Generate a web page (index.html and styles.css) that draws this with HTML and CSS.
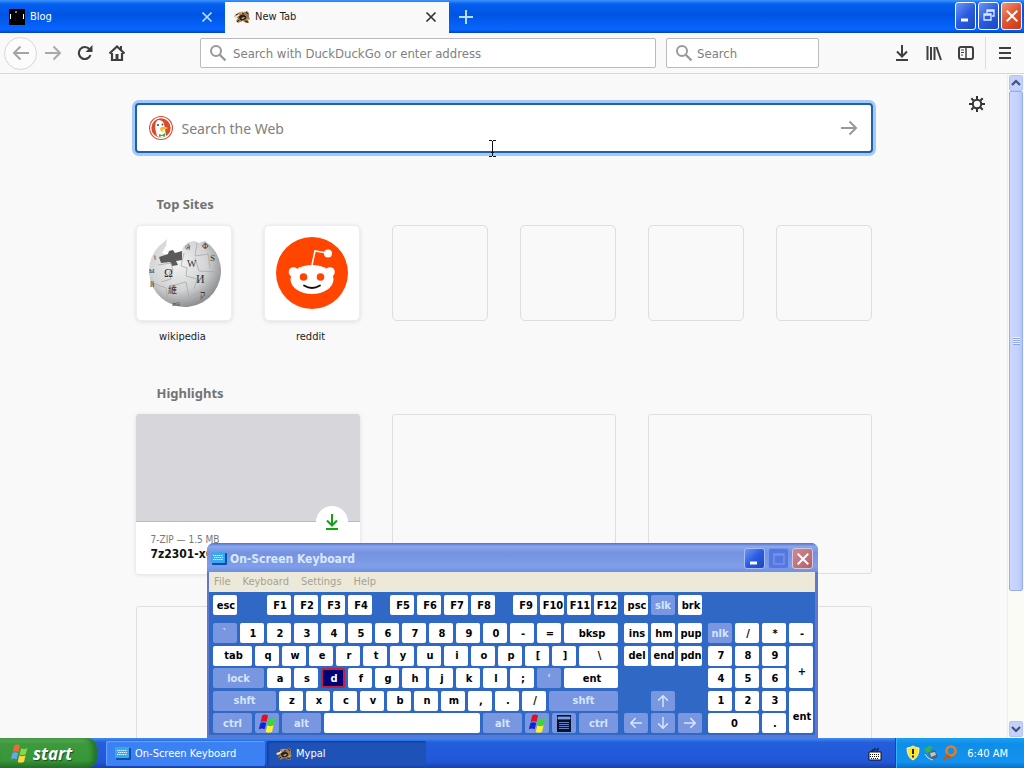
FILE: index.html
```html
<!DOCTYPE html>
<html lang="en">
<head>
    <meta charset="UTF-8">
    <title>New Tab</title>
    <link rel="stylesheet" href="styles.css">
</head>
<body>

<!-- shared icons -->
<svg class="sprite" width="0" height="0" aria-hidden="true">
    <symbol id="close" viewBox="0 0 12 12">
        <path d="M1.5 1.5l9 9M10.5 1.5l-9 9" fill="none" stroke="currentColor" stroke-width="1.7"/>
    </symbol>
    <symbol id="magnifier" viewBox="0 0 18 18">
        <circle cx="7" cy="7" r="5" fill="none" stroke="#999" stroke-width="2"/>
        <path d="M10.5 10.5l6 6" stroke="#999" stroke-width="2.4"/>
    </symbol>
    <symbol id="arrow" viewBox="0 0 16 16">
        <path d="M0 8h15M8.5 1.5L15 8l-6.500 6.500" fill="none" stroke="currentColor" stroke-width="2"/>
    </symbol>
    <symbol id="download" viewBox="0 0 16 16">
        <path d="M8 0v11M3 6.500l5 5 5-5M2 15h12" fill="none" stroke="currentColor" stroke-width="2"/>
    </symbol>
    <symbol id="flag" viewBox="0 0 18 18">
        <path d="M4 1.500q2.500-2 5.500 0l-1.500 6q-3-1.500-5.500 0z" fill="var(--f1)"/>
        <path d="M10.500 4q3 1.500 6-.500l-1.500 6q-3 2-6 .500z" fill="var(--f2)"/>
        <path d="M2.300 8.500q2.500-1.500 5.500 0l-1.500 6q-3-1.500-5.500 0z" fill="var(--f3)"/>
        <path d="M8.800 11q3 1.500 6-.300l-1.500 6q-3 2-6 .300z" fill="var(--f4)"/>
    </symbol>
    <symbol id="osk" viewBox="0 0 16 14">
        <rect x="1" y="1" width="15" height="12" rx="1" fill="#0a50a8"/>
        <rect width="14" height="11" rx="1" fill="#3ba7ef"/>
        <path d="M2 3.500h10M3 5.500h9M2 7.500h10" stroke="#e6f8ff" stroke-width="1.200" stroke-dasharray="1.300 .600"/>
    </symbol>
    <symbol id="mypal" viewBox="0 0 16 16">
        <path d="M0 8q1-3 4-4 3-2 7-1l2-1 2 2v4l1 2-2 1 1 3h-3l-3-2-3 1-2 1-2-2 2-3z" fill="#9a7a50"/>
        <path d="M5 8q4-4 7 0l-1 2-4 1zM12 3l2 2M3 13l2-2M11 12l3 1" fill="#2c2016" stroke="#2c2016"/>
        <path d="M0 8l4-3 2 1-4 3zM7 9l4-1-2 2z" fill="#f4e5c8"/>
        <path d="M4 4l4-1 3 1-3 1zM12 10l3-1-1 2z" fill="#d3b283"/>
        <path d="M2 6l2-1M8 4l2 1" stroke="#2c2016"/>
    </symbol>
</svg>

<header class="titlebar">
    <div class="tab">
        <svg width="16" height="16" viewBox="0 0 16 16"><path d="M0 0h16v16H0z"/><path d="M1.500 5v5M14.500 5v5M7 2v2" stroke="#fff"/></svg>
        <span class="tab-title">Blog</span>
        <button class="tab-close" aria-label="Close Blog"><svg width="12" height="12"><use href="#close"/></svg></button>
    </div>
    <div class="tab active">
        <svg width="16" height="16"><use href="#mypal"/></svg>
        <span class="tab-title">New Tab</span>
        <button class="tab-close" aria-label="Close New Tab"><svg width="12" height="12"><use href="#close"/></svg></button>
    </div>
    <button class="new-tab" aria-label="Open a new tab">
        <svg width="14" height="14" viewBox="0 0 14 14"><path d="M7 0v14M0 7h14" stroke="#b8deff" stroke-width="2"/></svg>
    </button>
    <div class="win-buttons">
        <button class="win-button" aria-label="Minimize"><svg width="16" height="16" viewBox="0 0 16 16"><path d="M3 12h7" stroke="#fff" stroke-width="3"/></svg></button>
        <button class="win-button" aria-label="Restore"><svg width="16" height="16" viewBox="0 0 16 16"><path d="M3 6h7v6H3zM3 7h7M6 5V2h7v6h-2M6 3h7" fill="none" stroke="#dcebff" stroke-width="1.300"/></svg></button>
        <button class="win-button red" aria-label="Close"><svg width="14" height="14"><use href="#close"/></svg></button>
    </div>
</header>

<nav class="toolbar">
    <button class="tool back" aria-label="Back"><svg class="flip" width="16" height="16"><use href="#arrow"/></svg></button>
    <button class="tool faded" aria-label="Forward"><svg width="16" height="16"><use href="#arrow"/></svg></button>
    <button class="tool" aria-label="Reload">
        <svg width="16" height="16" viewBox="0 0 16 16"><path d="M12.500 4.200A6 6 0 1 0 13.500 10" fill="none" stroke="currentColor" stroke-width="2.200"/><path d="M15.500 0v7H8.500z" fill="currentColor"/></svg>
    </button>
    <button class="tool" aria-label="Home">
        <svg width="16" height="16" viewBox="0 0 16 16"><path d="M0.500 8.500L8 1.500l7.500 7M3 8v7h10V8" fill="none" stroke="currentColor" stroke-width="2.200"/><path d="M6.500 9h3v6h-3zM11 1h2v4h-2z" fill="currentColor"/></svg>
    </button>
    <label class="field address">
        <svg width="18" height="18"><use href="#magnifier"/></svg>
        <input type="text" placeholder="Search with DuckDuckGo or enter address" aria-label="Address">
    </label>
    <label class="field search">
        <svg width="18" height="18"><use href="#magnifier"/></svg>
        <input type="text" placeholder="Search" aria-label="Search">
    </label>
    <div class="tools-right">
        <button class="tool" aria-label="Downloads"><svg width="16" height="16"><use href="#download"/></svg></button>
        <button class="tool" aria-label="Library">
            <svg width="16" height="16" viewBox="0 0 16 16"><path d="M1.500 1v14M5 2v13M8.500 2v13M10.500 2l4.500 13" fill="none" stroke="currentColor" stroke-width="2"/></svg>
        </button>
        <button class="tool" aria-label="Sidebars">
            <svg width="16" height="16" viewBox="0 0 16 16"><rect x="1" y="2" width="14" height="12" rx="2" fill="none" stroke="currentColor" stroke-width="2"/><path d="M8 2v12" stroke="currentColor" stroke-width="1.500"/><path d="M3 5h3M3 7.500h3M3 10h2" stroke="currentColor"/></svg>
        </button>
        <button class="tool menu" aria-label="Menu">
            <svg width="14" height="14" viewBox="0 0 14 14"><path d="M1 2h12M1 7h12M1 12h12" stroke="currentColor" stroke-width="2"/></svg>
        </button>
    </div>
</nav>

<div class="viewport">
    <main class="page">
        <button class="gear" aria-label="Customize">
            <svg width="16" height="16" viewBox="0 0 16 16"><circle cx="8" cy="8" r="4.200" fill="none" stroke="#333" stroke-width="2"/><path d="M8 0v3M8 13v3M0 8h3M13 8h3M2.300 2.300l2.200 2.200M11.500 11.500l2.200 2.200M13.700 2.300l-2.200 2.200M4.500 11.500l-2.200 2.200" stroke="#333" stroke-width="2"/></svg>
        </button>
        <div class="column">
            <form class="web-search">
                <svg width="24" height="24" viewBox="0 0 24 24">
                    <circle cx="12" cy="12" r="12" fill="#dc4a2c"/>
                    <circle cx="12" cy="12" r="10.300" fill="none" stroke="#fff" stroke-width="1.200"/>
                    <path d="M8 20Q5 10 7 6l2-2q5 0 6 4l1 5 1 8q-5 2-9-1z" fill="#fff"/>
                    <path d="M12 11q4-1 7 1-2 2-6 2l3 2q-5 0-5-3z" fill="#f7bd25"/>
                    <path d="M10 18l3 1 3-2v4l-3-1-3 1z" fill="#4caa45"/>
                    <circle cx="9" cy="9" r="1" fill="#345"/><circle cx="13.500" cy="8.500" r=".900" fill="#345"/>
                </svg>
                <input type="text" placeholder="Search the Web" aria-label="Search the Web">
                <button type="button" aria-label="Go"><svg width="16" height="16"><use href="#arrow"/></svg></button>
            </form>

            <h2>Top Sites</h2>
            <div class="sites">
                <a class="site" href="#wikipedia">
                    <span class="tile filled">
                        <svg width="76" height="76" viewBox="0 0 76 76">
                            <defs>
                                <radialGradient id="globe" cx=".4" cy=".35" r=".68">
                                    <stop offset="0" stop-color="#f3f3f3"/>
                                    <stop offset=".6" stop-color="#d2d3d4"/>
                                    <stop offset="1" stop-color="#888a8c"/>
                                </radialGradient>
                            </defs>
                            <path d="M13 11l5-4 3-3-1 7-4 7 5 2 5 1 9-3 2-6 6-5 6-1 4 2 6-2a36 36 0 1 1-46 5z" fill="url(#globe)"/>
                            <path d="M13 22l9-3 1-3 4-1 2 3 7-2v9l-6 1 2 4-6 1-2-4-9 1z" fill="#5a5a5a"/>
                            <path d="M12 30l13-2 2 7-4 2 2 7-10 3M38 18l-3 13 6 2-1 8 11 3-3 10M51 8l-2 13 13-2 2 14M4 47l16 6 2 14M25 51l15-4 3 15 13-6M49 23l4 13 19 1" fill="none" stroke="#aaa" stroke-width=".8"/>
                            <g font-family="Liberation Serif, serif" fill="#333">
                                <text x="18" y="42" font-size="12">Ω</text>
                                <text x="41" y="32" font-size="10">W</text>
                                <text x="50" y="48" font-size="12">И</text>
                                <text x="54" y="63" font-size="10">ק</text>
                                <text x="56" y="14" font-size="8">Ф</text>
                                <text x="64" y="26" font-size="9">S</text>
                                <text x="39" y="15" font-size="7">जे</text>
                                <text x="22" y="58" font-size="9" font-family="Noto Sans CJK SC, sans-serif">維</text>
                                <text x="3" y="38" font-size="8">ы</text>
                                <text x="4" y="52" font-size="8">й</text>
                                <text x="8" y="24" font-size="7">ţ</text>
                                <text x="26" y="71" font-size="7">வி</text>
                            </g>
                        </svg>
                    </span>
                    <span class="site-name">wikipedia</span>
                </a>
                <a class="site" href="#reddit">
                    <span class="tile filled">
                        <svg width="72" height="72" viewBox="0 0 72 72">
                            <circle cx="36" cy="36" r="36" fill="#ff4500"/>
                            <path d="M36 28l3-14 12 2" fill="none" stroke="#fff" stroke-width="1.600"/>
                            <circle cx="52" cy="16.500" r="4" fill="#fff"/>
                            <circle cx="17.500" cy="35" r="4.800" fill="#fff"/><circle cx="54" cy="35" r="4.800" fill="#fff"/>
                            <ellipse cx="36" cy="42.500" rx="21.500" ry="14.500" fill="#fff"/>
                            <circle cx="27.500" cy="40" r="3.800" fill="#ff4500"/><circle cx="44.500" cy="40" r="3.800" fill="#ff4500"/>
                            <path d="M28 48.500q8 5 16 0" fill="none" stroke="#111" stroke-width="1.800" stroke-linecap="round"/>
                        </svg>
                    </span>
                    <span class="site-name">reddit</span>
                </a>
                <span class="tile"></span>
                <span class="tile"></span>
                <span class="tile"></span>
                <span class="tile"></span>
            </div>

            <h2>Highlights</h2>
            <div class="cards">
                <a class="card filled" href="#7zip">
                    <span class="preview"></span>
                    <span class="badge"><svg width="16" height="16"><use href="#download"/></svg></span>
                    <span class="source">7-ZIP — 1.5 MB</span>
                    <span class="file">7z2301-x64.exe</span>
                </a>
                <span class="card"></span>
                <span class="card"></span>
                <span class="card"></span>
                <span class="card"></span>
                <span class="card"></span>
            </div>
        </div>
        <svg class="cursor" width="9" height="17" viewBox="0 0 9 17"><path d="M1 .5h3M5 .5h3M1 16.500h3M5 16.500h3M4.500 1v15M3 12.500h3" stroke="#111" fill="none"/></svg>
    </main>
    <div class="scrollbar">
        <button class="scroll-arrow" aria-label="Scroll up"><svg width="10" height="8" viewBox="0 0 10 8"><path d="M1 6l4-4 4 4" fill="none" stroke="#3b5284" stroke-width="2.200"/></svg></button>
        <div class="thumb"><span class="grip"></span></div>
        <button class="scroll-arrow down" aria-label="Scroll down"><svg width="10" height="8" viewBox="0 0 10 8"><path d="M1 2l4 4 4-4" fill="none" stroke="#3b5284" stroke-width="2.200"/></svg></button>
    </div>
</div>

<section class="keyboard">
    <div class="kb-title">
        <svg width="16" height="14"><use href="#osk"/></svg>
        <span>On-Screen Keyboard</span>
        <button class="win-button" aria-label="Minimize keyboard"><svg width="16" height="16" viewBox="0 0 16 16"><path d="M3 12h7" stroke="#fff" stroke-width="3"/></svg></button>
        <button class="win-button off" aria-label="Maximize keyboard" disabled><svg width="16" height="16" viewBox="0 0 16 16"><path d="M3 3h10v10H3zM3 4h10" fill="none" stroke="#6f93ee" stroke-width="1.500"/></svg></button>
        <button class="win-button red" aria-label="Close keyboard"><svg width="14" height="14"><use href="#close"/></svg></button>
    </div>
    <div class="kb-menu">
        <button>File</button><button>Keyboard</button><button>Settings</button><button>Help</button>
    </div>
    <div class="keys">
        <div class="block main">
            <div class="row fn">
                <button>esc</button>
                <div class="row"><button>F1</button><button>F2</button><button>F3</button><button>F4</button></div>
                <div class="row"><button>F5</button><button>F6</button><button>F7</button><button>F8</button></div>
                <div class="row"><button>F9</button><button>F10</button><button>F11</button><button>F12</button></div>
            </div>
            <div class="rows">
                <div class="row"><button class="dim">`</button><button>1</button><button>2</button><button>3</button><button>4</button><button>5</button><button>6</button><button>7</button><button>8</button><button>9</button><button>0</button><button>-</button><button>=</button><button class="grow">bksp</button></div>
                <div class="row"><button class="w-tab">tab</button><button>q</button><button>w</button><button>e</button><button>r</button><button>t</button><button>y</button><button>u</button><button>i</button><button>o</button><button>p</button><button>[</button><button>]</button><button class="grow">\</button></div>
                <div class="row"><button class="w-lock dim">lock</button><button>a</button><button>s</button><button class="pressed">d</button><button>f</button><button>g</button><button>h</button><button>j</button><button>k</button><button>l</button><button>;</button><button class="dim">'</button><button class="grow">ent</button></div>
                <div class="row"><button class="w-shift dim">shft</button><button>z</button><button>x</button><button>c</button><button>v</button><button>b</button><button>n</button><button>m</button><button>,</button><button>.</button><button>/</button><button class="grow dim">shft</button></div>
                <div class="row">
                    <button class="w-tab dim">ctrl</button>
                    <button class="dim" aria-label="Left Windows"><svg width="19" height="19"><use href="#flag"/></svg></button>
                    <button class="w-tab dim">alt</button>
                    <button class="grow" aria-label="Space"></button>
                    <button class="w-tab dim">alt</button>
                    <button class="dim" aria-label="Right Windows"><svg width="19" height="19"><use href="#flag"/></svg></button>
                    <button class="dim" aria-label="Context menu"><svg width="14" height="17" viewBox="0 0 14 17"><path d="M0 0h14v17H0z" fill="#071129"/><path d="M1 2h12v2H1zM2 7.500h10M2 9.500h10M2 11.500h10M2 13.500h10" fill="#829ce6" stroke="#829ce6" stroke-width=".8"/></svg></button>
                    <button class="w-tab dim">ctrl</button>
                </div>
            </div>
        </div>
        <div class="block">
            <div class="row"><button>psc</button><button class="dim">slk</button><button>brk</button></div>
            <div class="pad nav">
                <button>ins</button><button>hm</button><button>pup</button>
                <button>del</button><button>end</button><button>pdn</button>
                <button class="dim up" aria-label="Up"><svg class="turn-up" width="12" height="12"><use href="#arrow"/></svg></button>
                <button class="dim left" aria-label="Left"><svg class="flip" width="12" height="12"><use href="#arrow"/></svg></button>
                <button class="dim down" aria-label="Down"><svg class="turn-down" width="12" height="12"><use href="#arrow"/></svg></button>
                <button class="dim right" aria-label="Right"><svg width="12" height="12"><use href="#arrow"/></svg></button>
            </div>
        </div>
        <div class="block last">
            <div class="pad num">
                <button class="dim">nlk</button><button>/</button><button>*</button><button>-</button>
                <button>7</button><button>8</button><button>9</button><button class="tall">+</button>
                <button>4</button><button>5</button><button>6</button>
                <button>1</button><button>2</button><button>3</button><button class="tall">ent</button>
                <button class="wide">0</button><button>.</button>
            </div>
        </div>
    </div>
</section>

<footer class="taskbar">
    <button class="start"><svg width="19" height="19"><use href="#flag"/></svg>start</button>
    <div class="tasks">
        <button class="task"><svg width="16" height="14"><use href="#osk"/></svg>On-Screen Keyboard</button>
        <button class="task current"><svg width="16" height="16"><use href="#mypal"/></svg>Mypal</button>
    </div>
    <svg class="lang" width="14" height="14" viewBox="0 0 14 14"><path d="M1 5h12v8H1z" fill="#fff" stroke="#111"/><path d="M2 7.500h10M2 9.500h10M3 11.500h8" stroke="#111" stroke-dasharray="1 1"/><path d="M4 5V3h3V1M8 3h2V1" fill="none" stroke="#111"/></svg>
    <div class="tray">
        <svg width="14" height="16" viewBox="0 0 14 16"><path d="M7 1q3 2 6 2 0 9-6 12Q1 12 1 3q3 0 6-2z" fill="#fbe52b" stroke="#fff6bb"/><path d="M7 4v5M7 10.500v2" stroke="#222" stroke-width="2"/></svg>
        <svg width="14" height="16" viewBox="0 0 14 16"><path d="M4 7l7-2 3 7-7 3z" fill="#55606a"/><path d="M6 8l5-1 1 3-5 2z" fill="#b5c9d8"/><path d="M0 4l5-3 4 1-3 2 1 3-4 1z" fill="#35b544"/><path d="M1 9l3 4 5 2" stroke="#ddd" fill="none"/></svg>
        <svg width="16" height="16" viewBox="0 0 16 16"><circle cx="9" cy="6" r="4.500" fill="none" stroke="#ef7d18" stroke-width="2.500"/><path d="M6 9.500L2 15M6 11l3 2" stroke="#c35a12" stroke-width="2.500"/></svg>
        <time>6:40 AM</time>
    </div>
</footer>

</body>
</html>
```

FILE: styles.css
```css
* {
    box-sizing: border-box;
}

body {
    margin: 0;
    height: 100vh;
    display: flex;
    flex-direction: column;
    overflow: hidden;
    position: relative;
    background: #f9f9fa;
    color: #222;
    font: 11px "DejaVu Sans Condensed", "Noto Sans", sans-serif;
}

button, input {
    margin: 0;
    padding: 0;
    border: 0;
    background: none;
    color: inherit;
    font: inherit;
}

input {
    min-width: 0;
    flex: 1;
    outline: none;
}

input::placeholder {
    color: #808080;
    opacity: 1;
}

a {
    color: inherit;
    text-decoration: none;
}

svg {
    display: block;
    flex: none;
}

.sprite {
    position: absolute;
}

.flip {
    transform: rotate(180deg);
}

.turn-up {
    transform: rotate(-90deg);
}

.turn-down {
    transform: rotate(90deg);
}

/* title bar */
.titlebar {
    flex: none;
    height: 33px;
    display: flex;
    background: linear-gradient(#3d95ff, #0560ef 12%, #0054e3 45%, #0560f5 75%, #0466ff 90%, #0041c4);
}

.tab {
    width: 225px;
    display: flex;
    align-items: center;
    gap: 5px;
    padding: 0 12px 0 9px;
    color: #fff;
}

.tab.active {
    width: 224px;
    margin-top: 2px;
    padding-bottom: 2px;
    background: #f9f9fa;
    color: #222;
}

.tab-title {
    flex: 1;
}

.tab-close {
    color: #b8deff;
}

.active .tab-close {
    color: #333;
}

.new-tab {
    padding: 0 10px;
}

.win-buttons {
    margin-left: auto;
    display: flex;
    gap: 2px;
    padding: 2px 2px 3px 0;
}

.win-button {
    width: 21px;
    display: flex;
    align-items: center;
    justify-content: center;
    border: 1px solid #fff;
    border-radius: 3px;
    background: linear-gradient(135deg, #6d96f5, #2a5be0 50%, #1c48c0);
    color: #fff;
}

.win-button.red {
    background: linear-gradient(135deg, #f0967a, #e1532f 50%, #c53a14);
}

/* toolbar */
.toolbar {
    flex: none;
    height: 41px;
    display: flex;
    align-items: center;
    padding-left: 4px;
    border-bottom: 1px solid #d9d9dc;
    background: #f9f9fa;
    color: #3f3f42;
}

.tool {
    width: 32px;
    height: 32px;
    display: flex;
    align-items: center;
    justify-content: center;
}

.tool.back {
    width: 33px;
    height: 33px;
    border: 1px solid #d6d6d8;
    border-radius: 50%;
    background: #fcfcfc;
    color: #a5a5a5;
}

.tool.faded {
    color: #aaa;
}

.field {
    height: 30px;
    display: flex;
    align-items: center;
    gap: 6px;
    padding: 0 8px;
    border: 1px solid #bbb;
    border-radius: 2px;
    background: #fff;
    font-size: 13px;
}

.address {
    flex: 1;
    margin-left: 67px;
}

.search {
    width: 153px;
    margin: 0 67px 0 10px;
}

.search svg {
    margin-right: -2px;
}

.tools-right {
    display: flex;
}

.tool.menu {
    width: 39px;
    margin-left: 3px;
    border-left: 1px solid #ddd;
}

/* new tab page */
.viewport {
    flex: 1;
    min-height: 0;
    display: flex;
}

.page {
    flex: 1;
    min-width: 0;
    position: relative;
    overflow: hidden;
}

.column {
    width: 736px;
    max-width: 90%;
    margin: 0 auto;
    padding-top: 29px;
}

.gear {
    position: absolute;
    top: 22px;
    right: 22px;
}

.cursor {
    position: absolute;
    left: 488px;
    top: 66px;
}

.web-search {
    height: 50px;
    margin: 0 -1px 40px;
    display: flex;
    align-items: center;
    gap: 9px;
    padding: 0 14px 0 12px;
    border: 2px solid #1d62ad;
    border-radius: 4px;
    background: #fff;
    box-shadow: 0 0 0 3px #a4c8f8;
    color: #999;
    font: 14px "Noto Sans", sans-serif;
}

h2 {
    margin: 0 21px 10px;
    color: #737373;
    font: bold 13px/22px "Noto Sans", sans-serif;
}

.sites {
    display: grid;
    grid-template-columns: repeat(6, 96px);
    justify-content: space-between;
    height: 157px;
}

.site {
    text-align: center;
}

.tile {
    height: 96px;
    display: flex;
    align-items: center;
    justify-content: center;
    border: 1px solid #dededf;
    border-radius: 5px;
}

.tile.filled {
    border-color: #eee;
    background: #fff;
    box-shadow: 0 1px 4px #ddd;
}

.site-name {
    display: block;
    padding-right: 2px;
    line-height: 32px;
}

.cards {
    display: grid;
    grid-template-columns: repeat(3, 224px);
    grid-auto-rows: 160px;
    justify-content: space-between;
    row-gap: 32px;
}

.card {
    border: 1px solid #dededf;
    border-radius: 3px;
}

.card.filled {
    position: relative;
    border: 0;
    background: #fff;
    box-shadow: 0 1px 4px #ddd;
}

.preview {
    height: 108px;
    display: block;
    margin-bottom: 10px;
    border-bottom: 1px solid #bbb;
    border-radius: 3px 3px 0 0;
    background: #d7d7db;
}

.badge {
    position: absolute;
    top: 92px;
    right: 12px;
    width: 32px;
    height: 32px;
    display: flex;
    align-items: center;
    justify-content: center;
    border-radius: 50%;
    background: #fff;
    color: #12a312;
}

.source, .file {
    display: block;
    padding-left: 15px;
    line-height: 15px;
}

.source {
    color: #777;
    font-size: 10px;
}

.file {
    color: #111;
    font-size: 12px;
    font-weight: bold;
}

/* scrollbar */
.scrollbar {
    width: 17px;
    display: flex;
    flex-direction: column;
    padding: 1px;
    border-left: 1px solid #eee;
    background: #fbfbf6;
}

.scroll-arrow {
    height: 16px;
    flex: none;
    display: flex;
    align-items: center;
    justify-content: center;
    border: 1px solid #b3c4f5;
    border-radius: 2px;
    background: #c4d2fb;
}

.scroll-arrow.down {
    margin-top: auto;
}

.thumb {
    height: 500px;
    display: flex;
    align-items: center;
    justify-content: center;
    border: 1px solid #98b0ef;
    border-radius: 2px;
    background: linear-gradient(90deg, #cbd7fd, #c3d1fc 70%, #b2c5f7);
}

.grip {
    width: 7px;
    height: 8px;
    background: repeating-linear-gradient(#eef3ff 0 1px, #8aa5e8 1px 2px);
}

/* on-screen keyboard window */
.keyboard {
    position: absolute;
    left: 207px;
    bottom: 30px;
    width: 611px;
    padding: 0 3px 3px 2px;
    border-radius: 7px 7px 0 0;
    background: #6077cf;
    --f1: #e01020;
    --f2: #3ada2c;
    --f3: #1422c8;
    --f4: #fff32a;
}

.kb-title {
    height: 29px;
    display: flex;
    align-items: center;
    gap: 3px;
    margin: 0 -3px 0 -2px;
    padding: 2px 5px 0 4px;
    border-radius: 7px 7px 0 0;
    background: linear-gradient(#5273cc, #8aa6ee 12%, #7592e0 35%, #7f9fea 80%, #7090e0);
    color: #dbe8ff;
    font-size: 12px;
    font-weight: bold;
}

.kb-title span {
    flex: 1;
}

.kb-title .win-button {
    height: 21px;
    border-color: #a9bdf3;
}

.kb-title .off {
    background: #5578de;
    border-color: #7995e8;
}

.kb-title .red {
    background: linear-gradient(135deg, #cd8b95, #b0606c);
    border-color: #dbc5d8;
}

.kb-menu {
    height: 20px;
    display: flex;
    gap: 12px;
    padding: 0 0 2px 5px;
    background: #ece9d8;
    color: #a5a294;
}

.keys {
    display: flex;
    gap: 6px;
    padding: 3px 2px 2px 4px;
    background: #3068c6;
    font-weight: bold;
    color: #000;
}

.keys button {
    min-width: 24px;
    width: 24px;
    height: 20px;
    display: flex;
    align-items: center;
    justify-content: center;
    padding-left: 2px;
    border-radius: 2px;
    background: #fff;
    white-space: nowrap;
}

.keys .dim {
    padding-left: 0;
    background: #7996e0;
    color: #d3e6ff;
}

.keys .pressed {
    border: 2px solid #c4203c;
    background: #000078;
    color: #fff;
}

.block {
    display: flex;
    flex-direction: column;
    gap: 8px;
}

.main {
    flex: 1;
}

.last {
    justify-content: flex-end;
}

.row {
    display: flex;
    gap: 3px;
}

.row.fn {
    gap: 18px;
}

.fn > button {
    margin-right: 12px;
}

.rows {
    height: 110px;
    display: flex;
    flex-direction: column;
    justify-content: space-between;
}

.keys .grow {
    flex: 1;
}

.keys .w-tab {
    width: 39px;
}

.keys .w-lock {
    width: 51px;
}

.keys .w-shift {
    width: 63px;
}

.pad {
    height: 110px;
    display: grid;
    grid-template-rows: repeat(5, 20px);
    align-content: space-between;
    column-gap: 3px;
}

.nav {
    grid-template-columns: repeat(3, 24px);
}

.num {
    grid-template-columns: repeat(4, 24px);
}

.nav .up {
    grid-area: 4 / 2;
}

.nav .left {
    grid-area: 5 / 1;
}

.nav .down {
    grid-area: 5 / 2;
}

.nav .right {
    grid-area: 5 / 3;
}

.keys .tall {
    grid-row: span 2;
    height: auto;
    padding-top: 9px;
}

.keys .wide {
    grid-column: span 2;
    width: auto;
}

/* taskbar */
.taskbar {
    flex: none;
    height: 30px;
    display: flex;
    align-items: stretch;
    background: linear-gradient(#3f8cf3, #245edb 15%, #2157d7 80%, #1941a5);
    color: #fff;
}

.start {
    width: 97px;
    display: flex;
    align-items: center;
    gap: 4px;
    padding-left: 10px;
    border-radius: 0 10px 10px 0;
    background: linear-gradient(#64b264, #3c9a3c 20%, #379637 75%, #26702a);
    box-shadow: inset -4px 0 5px #23702a;
    font: italic bold 17px "Open Sans", sans-serif;
    text-shadow: 1px 1px 1px #1c4a1c;
    --f1: #f0683a;
    --f2: #86d64c;
    --f3: #67a4f4;
    --f4: #ffd742;
}

.tasks {
    display: flex;
    gap: 2px;
    padding: 3px 0 2px 9px;
}

.task {
    width: 159px;
    display: flex;
    align-items: center;
    gap: 4px;
    padding-left: 9px;
    border-radius: 2px;
    background: #3c81f3;
    box-shadow: inset 1px 1px 1px #6ba2fa;
}

.task.current {
    background: #1e52b7;
    box-shadow: inset 1px 1px 2px #123c8c;
}

.lang {
    margin: 9px 13px 0 auto;
}

.tray {
    display: flex;
    align-items: center;
    gap: 4px;
    padding: 0 16px 0 10px;
    border-left: 1px solid #0e4a9e;
    background: linear-gradient(#1ba0f3, #0f8ee9 20%, #1292ee 80%, #0b6fc4);
    box-shadow: inset 1px 0 #33b6fa;
}

.tray time {
    padding-left: 5px;
}
```
